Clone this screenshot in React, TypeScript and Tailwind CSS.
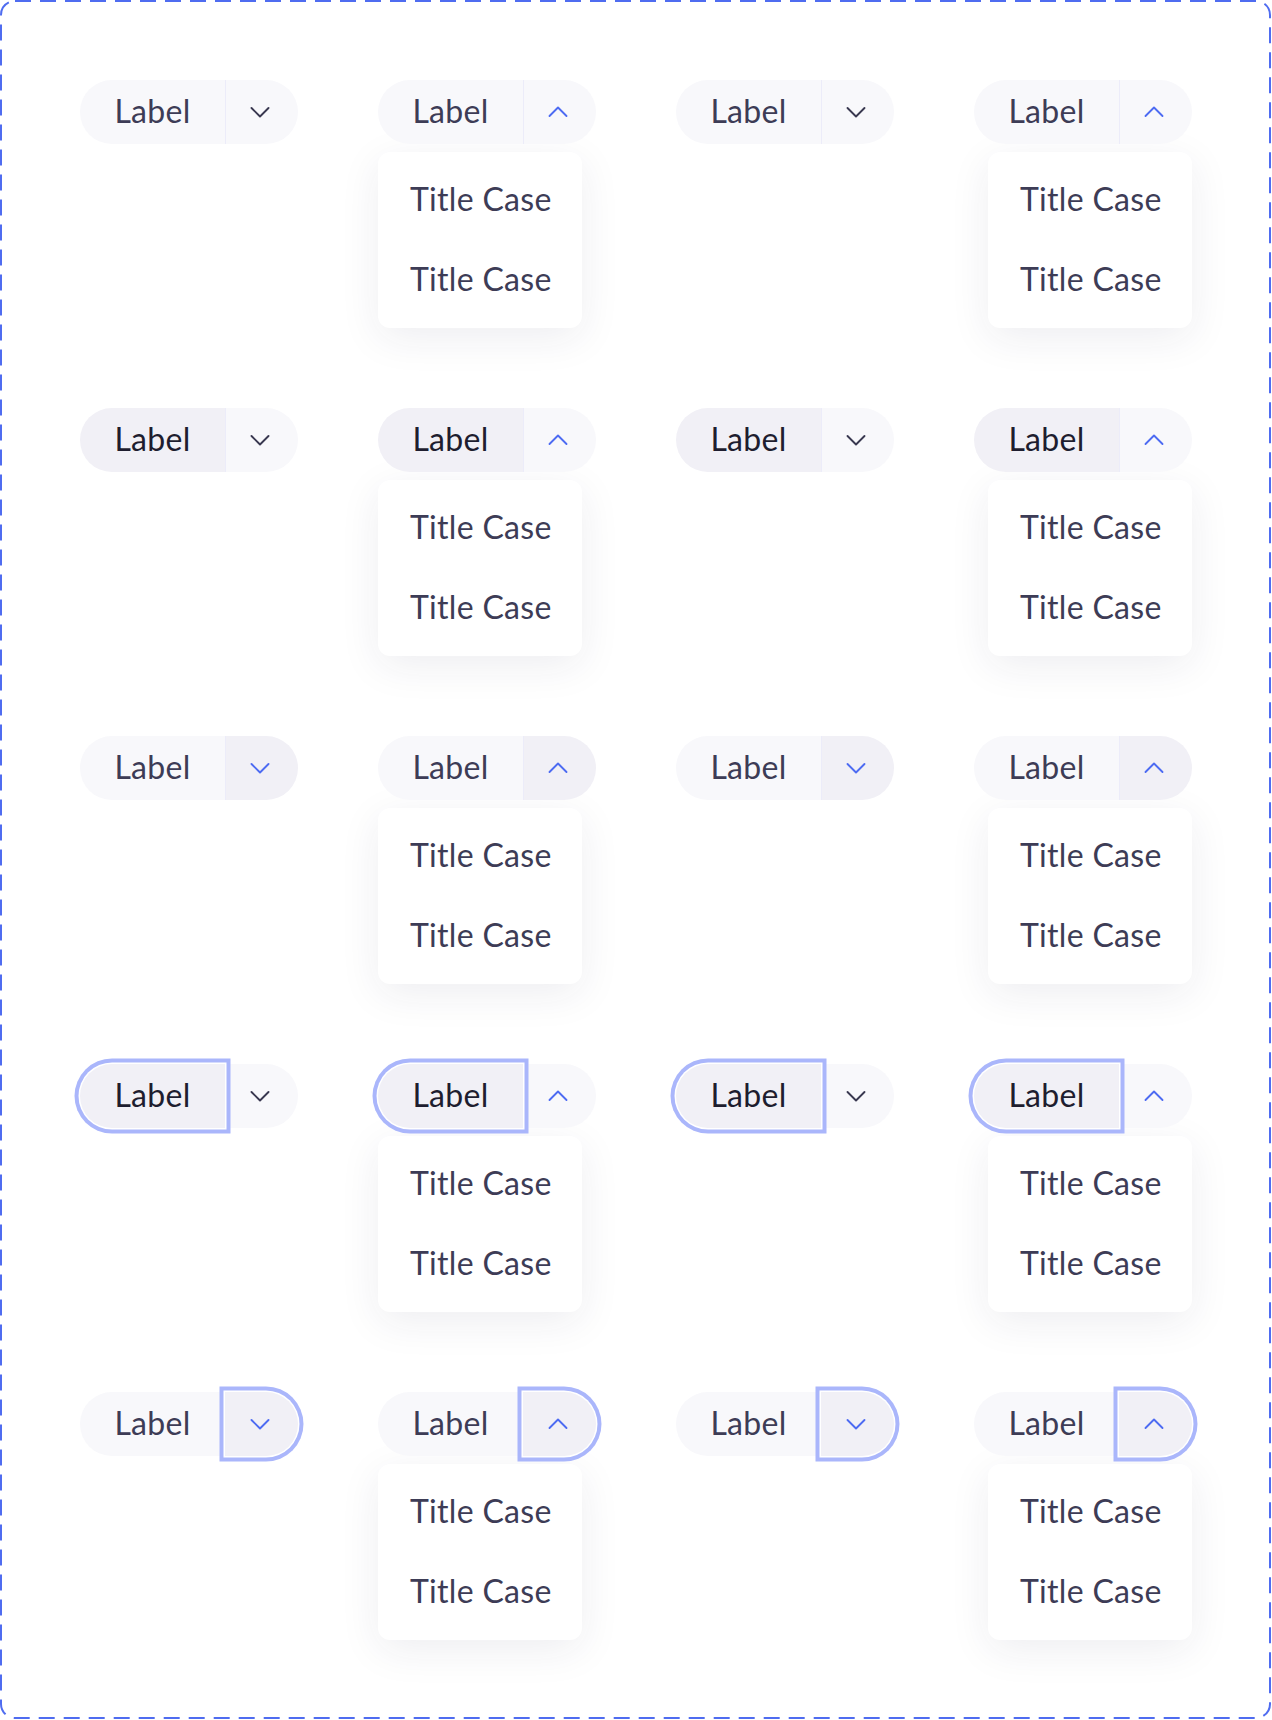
import React from "react";

type Seg = "none" | "hover" | "focus";

function Chevron({ up, active }: { up: boolean; active: boolean }) {
  return (
    <svg width="20" height="20" viewBox="0 0 20 20" fill="none">
      <polyline
        points={up ? "1.5,14 10,5.5 18.5,14" : "1.5,6 10,14.5 18.5,6"}
        stroke={active ? "#4d6bf2" : "#393850"}
        strokeWidth="1.9"
        strokeLinecap="round"
        strokeLinejoin="round"
      />
    </svg>
  );
}

function SplitButton({
  left,
  right,
  open,
}: {
  left: Seg;
  right: Seg;
  open: boolean;
}) {
  const leftBg = left === "none" ? "bg-[#f8f8fb]" : "bg-[#f1f0f6]";
  const rightBg = right === "none" ? "bg-[#f8f8fb]" : "bg-[#f1f0f6]";
  const leftText = left === "none" ? "text-[#3d3c56]" : "text-[#1e1d2f]";
  const chevActive = open || right !== "none";
  return (
    <div className="flex h-[64px] w-[218px]">
      <div
        className={`relative flex h-[64px] w-[145px] items-center justify-center ${leftBg} ${
          left === "focus"
            ? "z-10 rounded-l-full shadow-[0_0_0_1.5px_#ffffff,0_0_0_5.5px_#aab6fb]"
            : "rounded-l-full"
        }`}
      >
        <span className={`-mt-[2px] whitespace-nowrap text-[32px] leading-none tracking-[0.3px] ${leftText}`}>Label</span>
      </div>
      <div
        className={`relative flex h-[64px] w-[73px] items-center justify-center ${rightBg} ${
          right === "focus"
            ? "z-10 rounded-r-full shadow-[0_0_0_1.5px_#ffffff,0_0_0_5.5px_#aab6fb]"
            : "rounded-r-full border-l border-[#ececf9]"
        }`}
      >
        <span className="-ml-[4px] flex">
          <Chevron up={open} active={chevActive} />
        </span>
      </div>
    </div>
  );
}

function Menu({ alignRight }: { alignRight: boolean }) {
  return (
    <div
      className={`mt-2 w-[204px] rounded-[12px] bg-white py-2 shadow-[0_10px_40px_rgba(40,40,80,0.08)] ${
        alignRight ? "self-end" : "self-start"
      }`}
    >
      <div className="flex h-20 items-center whitespace-nowrap px-8 pb-[2px] text-[32px] leading-none tracking-[0.3px] text-[#3d3c56]">
        Title Case
      </div>
      <div className="flex h-20 items-center whitespace-nowrap px-8 pb-[2px] text-[32px] leading-none tracking-[0.3px] text-[#3d3c56]">
        Title Case
      </div>
    </div>
  );
}

const rows: { left: Seg; right: Seg }[] = [
  { left: "none", right: "none" },
  { left: "hover", right: "none" },
  { left: "none", right: "hover" },
  { left: "focus", right: "none" },
  { left: "none", right: "focus" },
];

export default function App() {
  return (
    <div
      className="relative h-[1720px] w-[1272px] bg-white"
      style={{ fontFamily: "Lato, 'Open Sans', sans-serif" }}
    >
      <svg
        className="pointer-events-none absolute inset-0"
        width="1272"
        height="1720"
      >
        <rect
          x="1"
          y="1"
          width="1269"
          height="1717"
          rx="14"
          fill="none"
          stroke="#4f6cf0"
          strokeWidth="2"
          strokeDasharray="16 9"
        />
      </svg>
      <div className="grid grid-cols-[repeat(4,218px)] gap-x-[80px] gap-y-[80px] p-[80px]">
        {rows.map((r, ri) =>
          [0, 1, 2, 3].map((ci) => {
            const open = ci === 1 || ci === 3;
            return (
              <div key={`${ri}-${ci}`} className="flex h-[248px] flex-col">
                <SplitButton left={r.left} right={r.right} open={open} />
                {open && <Menu alignRight={ci === 3} />}
              </div>
            );
          })
        )}
      </div>
    </div>
  );
}
